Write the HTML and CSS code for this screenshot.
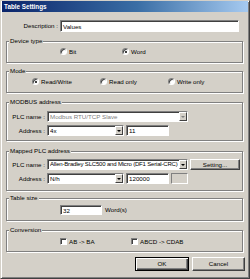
FILE: index.html
```html
<!DOCTYPE html>
<html>
<head>
<meta charset="utf-8">
<link rel="stylesheet" href="styles.css">
</head>
<body>
<div class="window">
  <div class="titlebar"><span class="title">Table Settings</span></div>
  <div class="content">
    <div class="desc-row">
      <label class="desc-label">Description :</label>
      <div class="field desc-input">Values</div>
    </div>

    <fieldset class="group g-device">
      <legend>Device type</legend>
      <div class="options opt-device">
        <span class="opt w62"><span class="radio"></span>Bit</span>
        <span class="opt"><span class="radio checked"></span>Word</span>
      </div>
    </fieldset>

    <fieldset class="group g-mode">
      <legend>Mode</legend>
      <div class="options opt-mode">
        <span class="opt w68"><span class="radio checked"></span>Read/Write</span>
        <span class="opt w68"><span class="radio"></span>Read only</span>
        <span class="opt"><span class="radio"></span>Write only</span>
      </div>
    </fieldset>

    <fieldset class="group g-modbus">
      <legend>MODBUS address</legend>
      <div class="form-row">
        <label class="lbl">PLC name :</label>
        <div class="field select w141 disabled"><span class="val">Modbus RTU/TCP Slave</span><span class="drop"><span class="arrow"></span></span></div>
      </div>
      <div class="form-row">
        <label class="lbl">Address :</label>
        <div class="field select w77"><span class="val">4x</span><span class="drop"><span class="arrow"></span></span></div>
        <div class="field w43">11</div>
      </div>
    </fieldset>

    <fieldset class="group g-mapped">
      <legend>Mapped PLC address</legend>
      <div class="form-row">
        <label class="lbl">PLC name :</label>
        <div class="field select w141"><span class="val tight">Allen-Bradley SLC500 and Micro (DF1 Serial-CRC)</span><span class="drop"><span class="arrow"></span></span></div>
        <button class="btn btn-setting">Setting...</button>
      </div>
      <div class="form-row">
        <label class="lbl">Address :</label>
        <div class="field select w77"><span class="val">N/h</span><span class="drop"><span class="arrow"></span></span></div>
        <div class="field w43">120000</div>
        <div class="field blank"></div>
      </div>
    </fieldset>

    <fieldset class="group g-table">
      <legend>Table size</legend>
      <div class="table-row">
        <div class="field w42">32</div>
        <span class="unit">Word(s)</span>
      </div>
    </fieldset>

    <fieldset class="group g-conv">
      <legend>Conversion</legend>
      <div class="options opt-conv">
        <span class="opt w71"><span class="check"></span>AB -&gt; BA</span>
        <span class="opt"><span class="check"></span>ABCD -&gt; CDAB</span>
      </div>
    </fieldset>

    <div class="buttons">
      <button class="btn btn-ok">OK</button>
      <button class="btn btn-cancel">Cancel</button>
    </div>
  </div>
</div>
</body>
</html>
```
FILE: styles.css
```css
* { box-sizing: border-box; }
html, body { margin: 0; padding: 0; }
body {
  width: 250px;
  height: 279px;
  background: #d4d0c8;
  font-family: "Liberation Sans", Arial, sans-serif;
  font-size: 6.2px;
  color: #000;
  overflow: hidden;
}
.window {
  width: 250px;
  height: 279px;
  border: 1px solid;
  border-color: #d4d0c8 #404040 #404040 #d4d0c8;
  box-shadow: inset 1px 1px #fff, inset -1px -1px #808080;
  padding: 0 1px 1px 1px;
  display: flex;
  flex-direction: column;
}
.titlebar {
  height: 11px;
  background: linear-gradient(to right, #0a246a, #3a6ea5 55%, #a6caf0);
  display: flex;
  align-items: center;
  padding-left: 2px;
  flex: none;
}
.title {
  color: #fff;
  font-weight: bold;
  font-size: 6.3px;
  line-height: 8px;
}
.content {
  display: flex;
  flex-direction: column;
  flex: 1;
}
.desc-row {
  display: flex;
  align-items: center;
  margin-top: 8px;
  height: 12px;
}
.desc-label {
  width: 56px;
  text-align: right;
  margin-right: 2px;
  line-height: 8px;
  white-space: nowrap;
}
.field {
  height: 11px;
  background: #fff;
  border: 1px solid;
  border-color: #808080 #fff #fff #808080;
  box-shadow: inset 1px 1px #404040;
  padding: 0 2px;
  line-height: 9px;
  white-space: nowrap;
  overflow: hidden;
  display: flex;
  align-items: center;
  flex: none;
}
.desc-input { width: 179px; height: 12px; }
.group {
  margin: 5px 5px 0 4px;
  border: 1px solid #808080;
  box-shadow: 1px 1px 0 #fff, inset 1px 1px 0 #fff;
  padding: 0;
  min-inline-size: 0;
}
.group legend {
  padding: 0 1px;
  margin-left: 2px;
  line-height: 8px;
  background: #d4d0c8;
}
.g-device { margin-top: 5px; padding: 2px 0 6px; }
.g-mode { margin-top: 4px; padding: 2px 0 6px; }
.g-modbus { margin-top: 5px; padding: 5px 0 4px; }
.g-mapped { margin-top: 6px; padding: 4px 0 6px; }
.g-table { margin-top: 3px; padding: 3px 0 5px; }
.g-conv { margin-top: 5px; padding: 3px 0 5px; }

.options {
  display: flex;
  align-items: center;
  height: 9px;
}
.opt-device { padding-left: 53px; }
.opt-mode { padding-left: 25px; }
.opt-conv { padding-left: 53px; }
.opt {
  display: flex;
  align-items: center;
  white-space: nowrap;
  line-height: 8px;
}
.w62 { width: 62px; }
.w68 { width: 68px; }
.w71 { width: 71px; }

.radio {
  width: 7px;
  height: 7px;
  border-radius: 50%;
  background: #fff;
  border: 1px solid;
  border-color: #808080 #fff #fff #808080;
  box-shadow: inset 1px 1px #404040;
  margin-right: 2px;
  position: relative;
  flex: none;
}
.radio.checked::after {
  content: "";
  position: absolute;
  left: 1.5px;
  top: 1.5px;
  width: 2px;
  height: 2px;
  border-radius: 50%;
  background: #000;
}
.check {
  width: 7px;
  height: 7px;
  background: #fff;
  border: 1px solid;
  border-color: #808080 #fff #fff #808080;
  box-shadow: inset 1px 1px #404040;
  margin-right: 2px;
  flex: none;
}

.form-row {
  display: flex;
  align-items: center;
  height: 11px;
  gap: 2px;
}
.form-row + .form-row { margin-top: 3px; }
.lbl {
  width: 38px;
  text-align: right;
  margin-right: 0;
  line-height: 8px;
  white-space: nowrap;
  flex: none;
}
.select {
  position: relative;
  padding-right: 0;
  justify-content: space-between;
}
.select .val {
  overflow: hidden;
  flex: 1;
}
.select .val.tight {
  letter-spacing: -0.18px;
  font-size: 6px;
}
.disabled .val { color: #808080; }
.drop {
  width: 8px;
  height: 9px;
  background: #d4d0c8;
  border: 1px solid;
  border-color: #fff #404040 #404040 #fff;
  display: flex;
  align-items: center;
  justify-content: center;
  flex: none;
}
.arrow {
  width: 0;
  height: 0;
  border-left: 2px solid transparent;
  border-right: 2px solid transparent;
  border-top: 2px solid #000;
}
.disabled .arrow { border-top-color: #808080; }
.w141 { width: 141px; }
.w77 { width: 77px; }
.w43 { width: 43px; }
.w42 { width: 42px; }
.blank {
  width: 17px;
  background: #d4d0c8;
  box-shadow: none;
  border-color: #808080 #fff #fff #808080;
}

.btn {
  font-family: inherit;
  font-size: 6.2px;
  color: #000;
  background: #d4d0c8;
  border: 1px solid;
  border-color: #fff #404040 #404040 #fff;
  box-shadow: inset -1px -1px #808080;
  padding: 0;
  margin: 0;
  line-height: 8px;
  flex: none;
}
.btn-setting { width: 50px; height: 11px; }

.table-row {
  display: flex;
  align-items: center;
  padding-left: 53px;
  height: 10px;
}
.table-row .field { height: 10px; }
.unit { margin-left: 3px; line-height: 8px; }

.buttons {
  display: flex;
  justify-content: flex-end;
  gap: 3px;
  margin-top: 5px;
  padding-right: 3px;
}
.btn-ok {
  width: 54px;
  height: 14px;
  border: 1px solid #000;
  box-shadow: inset 1px 1px #fff, inset -1px -1px #404040, inset -2px -2px #808080;
}
.btn-cancel { width: 53px; height: 14px; }
```
